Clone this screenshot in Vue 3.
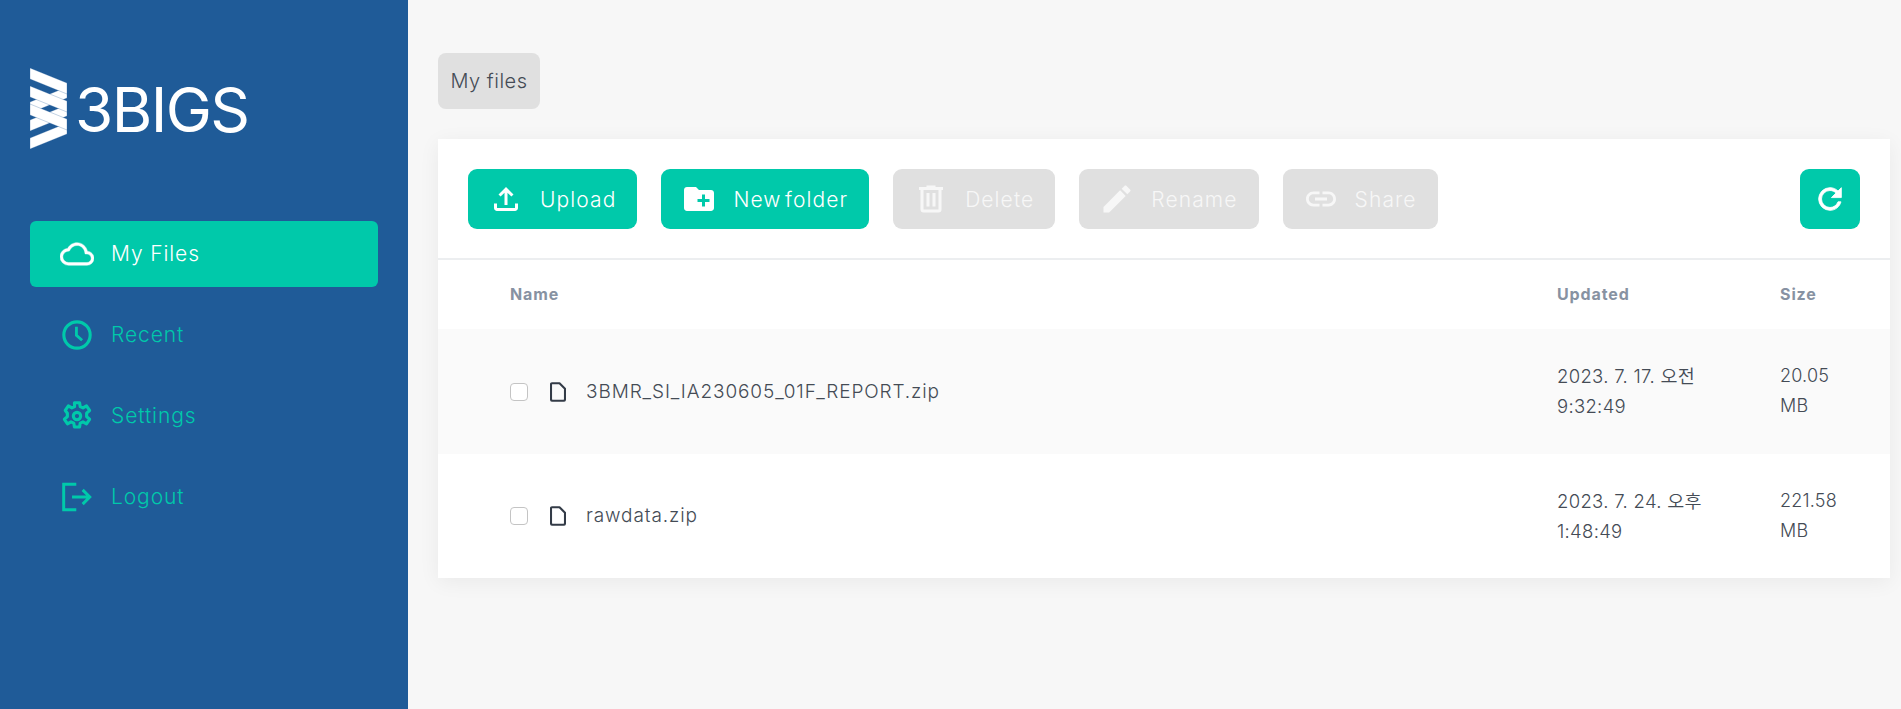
<template>
  <div class="layout">
    <aside class="sidebar">
      <div class="logo">
        <svg class="logo-mark" viewBox="0 0 37 81" width="37" height="81">
          <polygon v-for="(p, i) in logoBands" :key="i" :points="p" fill="#fff" stroke="#1f5b98" stroke-opacity="0.55" stroke-width="0.5" />
        </svg>
        <span class="logo-text">3BIGS</span>
      </div>
      <nav class="menu">
        <a
          v-for="item in menu"
          :key="item.label"
          class="menu-item"
          :class="{ active: item.active }"
        >
          <svg viewBox="0 0 24 24" class="menu-icon" v-html="item.icon"></svg>
          <span>{{ item.label }}</span>
        </a>
      </nav>
    </aside>

    <main class="content">
      <div class="crumb">My files</div>

      <section class="card">
        <div class="toolbar">
          <button
            v-for="btn in actions"
            :key="btn.label"
            class="btn"
            :class="{ disabled: btn.disabled }"
          >
            <svg viewBox="0 0 24 24" class="btn-icon"><path :d="btn.icon" fill="currentColor" /></svg>
            <span>{{ btn.label }}</span>
          </button>
          <button class="btn refresh">
            <svg viewBox="0 0 24 24" class="refresh-icon"><path :d="refreshIcon" fill="currentColor" stroke="currentColor" stroke-width="0.6" /></svg>
          </button>
        </div>

        <div class="row head">
          <div>Name</div>
          <div>Updated</div>
          <div>Size</div>
        </div>
        <div v-for="file in files" :key="file.name" class="row file">
          <div class="name-cell">
            <span class="check"></span>
            <svg viewBox="0 0 16 20" class="file-icon">
              <path d="M2 1.2h7.5L15 6.7v10.6a1.5 1.5 0 0 1-1.5 1.5h-11A1.5 1.5 0 0 1 1 17.3V2.2a1 1 0 0 1 1-1z" fill="none" stroke="currentColor" stroke-width="2.1" stroke-linejoin="round" />
            </svg>
            <span class="file-name">{{ file.name }}</span>
          </div>
          <div class="date-cell">{{ file.updated }}</div>
          <div class="size-cell">{{ file.size }}</div>
        </div>
      </section>
    </main>
  </div>
</template>

<script setup>
const logoBands = [
  '0,70 37,55 37,66 0,81',
  '0,52 37,37 37,48 0,63',
  '0,34 37,19 37,30 0,45',
  '0,0 37,15 37,26 0,11',
  '0,18 37,33 37,44 0,29',
  '0,36 37,51 37,62 0,47'
]

const menu = [
  {
    label: 'My Files',
    active: true,
    icon: '<path fill="currentColor" stroke="currentColor" stroke-width="0.3" d="M19.35,10.03C18.67,6.59 15.64,4 12,4C9.11,4 6.6,5.64 5.35,8.03C2.34,8.36 0,10.9 0,14A6,6 0 0,0 6,20H19A5,5 0 0,0 24,15C24,12.36 21.95,10.22 19.35,10.03M19,18H6A4,4 0 0,1 2,14C2,11.95 3.53,10.24 5.56,10.03L6.63,9.92L7.13,8.97C8.08,7.14 9.95,6 12,6C14.62,6 16.88,7.86 17.39,10.43L17.69,11.93L19.22,12.04C20.78,12.14 22,13.45 22,15A3,3 0 0,1 19,18Z"/>'
  },
  {
    label: 'Recent',
    icon: '<circle cx="12" cy="12" r="9.3" fill="none" stroke="currentColor" stroke-width="2.2"/><path d="M11.6 6.2v6l4 3.5" fill="none" stroke="currentColor" stroke-width="2"/>'
  },
  {
    label: 'Settings',
    icon: '<path fill="none" stroke="currentColor" stroke-width="2.2" stroke-linejoin="round" d="M10.2 2.6h3.6l.5 2.8 1.9.9 2.5-1.4 2.2 3.2-2.1 1.9v2.4l2.1 1.9-2.2 3.2-2.5-1.4-1.9.9-.5 2.8h-3.6l-.5-2.8-1.9-.9-2.5 1.4-2.2-3.2 2.1-1.9V10L3.7 8.1l2.2-3.2 2.5 1.4 1.9-.9z"/><circle cx="12" cy="12" r="2.6" fill="none" stroke="currentColor" stroke-width="2.2"/>'
  },
  {
    label: 'Logout',
    icon: '<path fill="none" stroke="currentColor" stroke-width="2.1" d="M11.5 3H2.6v18h8.9M8.5 12H21M16 7l5 5-5 5"/>'
  }
]

const actions = [
  { label: 'Upload', icon: 'M18 15v3H6v-3H4v3c0 1.1.9 2 2 2h12c1.1 0 2-.9 2-2v-3h-2zM7 9l1.41 1.41L11 7.83V16h2V7.83l2.59 2.58L17 9l-5-5-5 5z' },
  { label: 'New folder', icon: 'M20 6h-8l-2-2H4c-1.11 0-1.99.89-1.99 2L2 18c0 1.11.89 2 2 2h16c1.11 0 2-.89 2-2V8c0-1.11-.89-2-2-2zm-1 8h-3v3h-2v-3h-3v-2h3V9h2v3h3v2z' },
  { label: 'Delete', disabled: true, icon: 'M9,3V4H4V6H5V19A2,2 0 0,0 7,21H17A2,2 0 0,0 19,19V6H20V4H15V3H9M7,6H17V19H7V6M9,8V17H11V8H9M13,8V17H15V8H13Z' },
  { label: 'Rename', disabled: true, icon: 'M3 17.25V21h3.75L17.81 9.94l-3.75-3.75L3 17.25zM20.71 7.04c.39-.39.39-1.02 0-1.41l-2.34-2.34c-.39-.39-1.02-.39-1.41 0l-1.83 1.83 3.75 3.75 1.83-1.83z' },
  { label: 'Share', disabled: true, icon: 'M3.9 12c0-1.71 1.39-3.1 3.1-3.1h4V7H7c-2.76 0-5 2.24-5 5s2.24 5 5 5h4v-1.9H7c-1.71 0-3.1-1.39-3.1-3.1zM8 13h8v-2H8v2zm9-6h-4v1.9h4c1.71 0 3.1 1.39 3.1 3.1s-1.39 3.1-3.1 3.1h-4V17h4c2.76 0 5-2.24 5-5s-2.24-5-5-5z' }
]

const refreshIcon = 'M17.65,6.35C16.2,4.9 14.21,4 12,4A8,8 0 0,0 4,12A8,8 0 0,0 12,20C15.73,20 18.84,17.45 19.73,14H17.65C16.83,16.33 14.61,18 12,18A6,6 0 0,1 6,12A6,6 0 0,1 12,6C13.66,6 15.14,6.69 16.22,7.78L13,11H20V4L17.65,6.35Z'

const files = [
  { name: '3BMR_SI_IA230605_01F_REPORT.zip', updated: '2023. 7. 17. 오전 9:32:49', size: '20.05 MB' },
  { name: 'rawdata.zip', updated: '2023. 7. 24. 오후 1:48:49', size: '221.58 MB' }
]
</script>

<style>
body {
  background: #f7f7f7;
}
</style>

<style scoped>
.layout {
  display: flex;
  height: 709px;
  font-family: Inter, "Noto Sans CJK KR", sans-serif;
  color: #444b55;
  overflow: hidden;
}

.sidebar {
  width: 408px;
  flex-shrink: 0;
  background-color: #1f5b98;
  padding: 68px 30px 0;
  box-sizing: border-box;
}

.logo {
  display: flex;
  align-items: center;
  gap: 8px;
  height: 81px;
  color: #fff;
}

.logo-mark {
  flex-shrink: 0;
}

.logo-text {
  font-size: 62px;
  font-weight: 400;
  letter-spacing: -1.6px;
  line-height: 1;
  margin-top: 2px;
}

.menu {
  margin-top: 72px;
  display: flex;
  flex-direction: column;
  gap: 15px;
}

.menu-item {
  height: 66px;
  display: flex;
  align-items: center;
  gap: 17px;
  padding-left: 30px;
  border-radius: 6px;
  font-size: 21px;
  font-weight: 350;
  letter-spacing: 0.9px;
  color: #00c9aa;
}

.menu-item span {
  margin-top: -1px;
}

.menu-item.active {
  background-color: #00c9aa;
  color: #fff;
}

.menu-icon {
  width: 34px;
  height: 34px;
  flex-shrink: 0;
}

.content {
  flex: 1;
  padding: 53px 11px 0 30px;
  background: #f7f7f7;
}

.crumb {
  display: inline-block;
  height: 56px;
  line-height: 56px;
  padding: 0 12.5px;
  background-color: #e0e0e0;
  border-radius: 8px;
  font-size: 20px;
  font-weight: 350;
  letter-spacing: 0.5px;
}

.card {
  margin-top: 30px;
  background-color: #fff;
  box-shadow: 0 4px 20px rgba(0, 0, 0, 0.06);
}

.toolbar {
  display: flex;
  gap: 24px;
  padding: 30px;
  border-bottom: 2px solid #eceef0;
  height: 121px;
  box-sizing: border-box;
}

.btn {
  height: 60px;
  display: flex;
  align-items: center;
  gap: 16px;
  padding: 0 21px 0 20px;
  border: none;
  border-radius: 9px;
  background-color: #00c9aa;
  color: #fff;
  font-family: inherit;
  font-size: 21px;
  font-weight: 350;
  letter-spacing: 1.1px;
  word-spacing: -3.5px;
}

.btn.disabled {
  background-color: #e0e0e0;
  color: #f7f7f7;
}

.btn-icon {
  width: 36px;
  height: 36px;
  flex-shrink: 0;
}

.refresh {
  margin-left: auto;
  width: 60px;
  padding: 0;
  justify-content: center;
}

.refresh-icon {
  width: 34px;
  height: 34px;
}

.row {
  display: grid;
  grid-template-columns: 1047px 223px 1fr;
  padding-left: 72px;
  align-items: center;
}

.head {
  height: 69px;
  box-sizing: border-box;
  padding-bottom: 2px;
  font-size: 16px;
  font-weight: 700;
  letter-spacing: 0.9px;
  color: #8792a2;
}

.file {
  height: 124.5px;
  font-size: 18px;
  font-weight: 350;
  line-height: 30px;
  letter-spacing: 0.2px;
}

.file:nth-child(odd) {
  background-color: #fafafa;
}

.name-cell {
  display: flex;
  align-items: center;
  padding-top: 1px;
}

.file-name {
  font-size: 19px;
  letter-spacing: 0.9px;
}

.check {
  width: 18px;
  height: 18px;
  box-sizing: border-box;
  border: 1px solid #c4c4c4;
  border-radius: 4px;
  background: #fff;
  margin-right: 22px;
}

.file-icon {
  width: 16px;
  height: 20px;
  color: #333b47;
  margin-right: 20px;
}

.date-cell {
  font-size: 18.5px;
  letter-spacing: 0.3px;
  padding-right: 50px;
}

.size-cell {
  padding-right: 40px;
}
</style>
